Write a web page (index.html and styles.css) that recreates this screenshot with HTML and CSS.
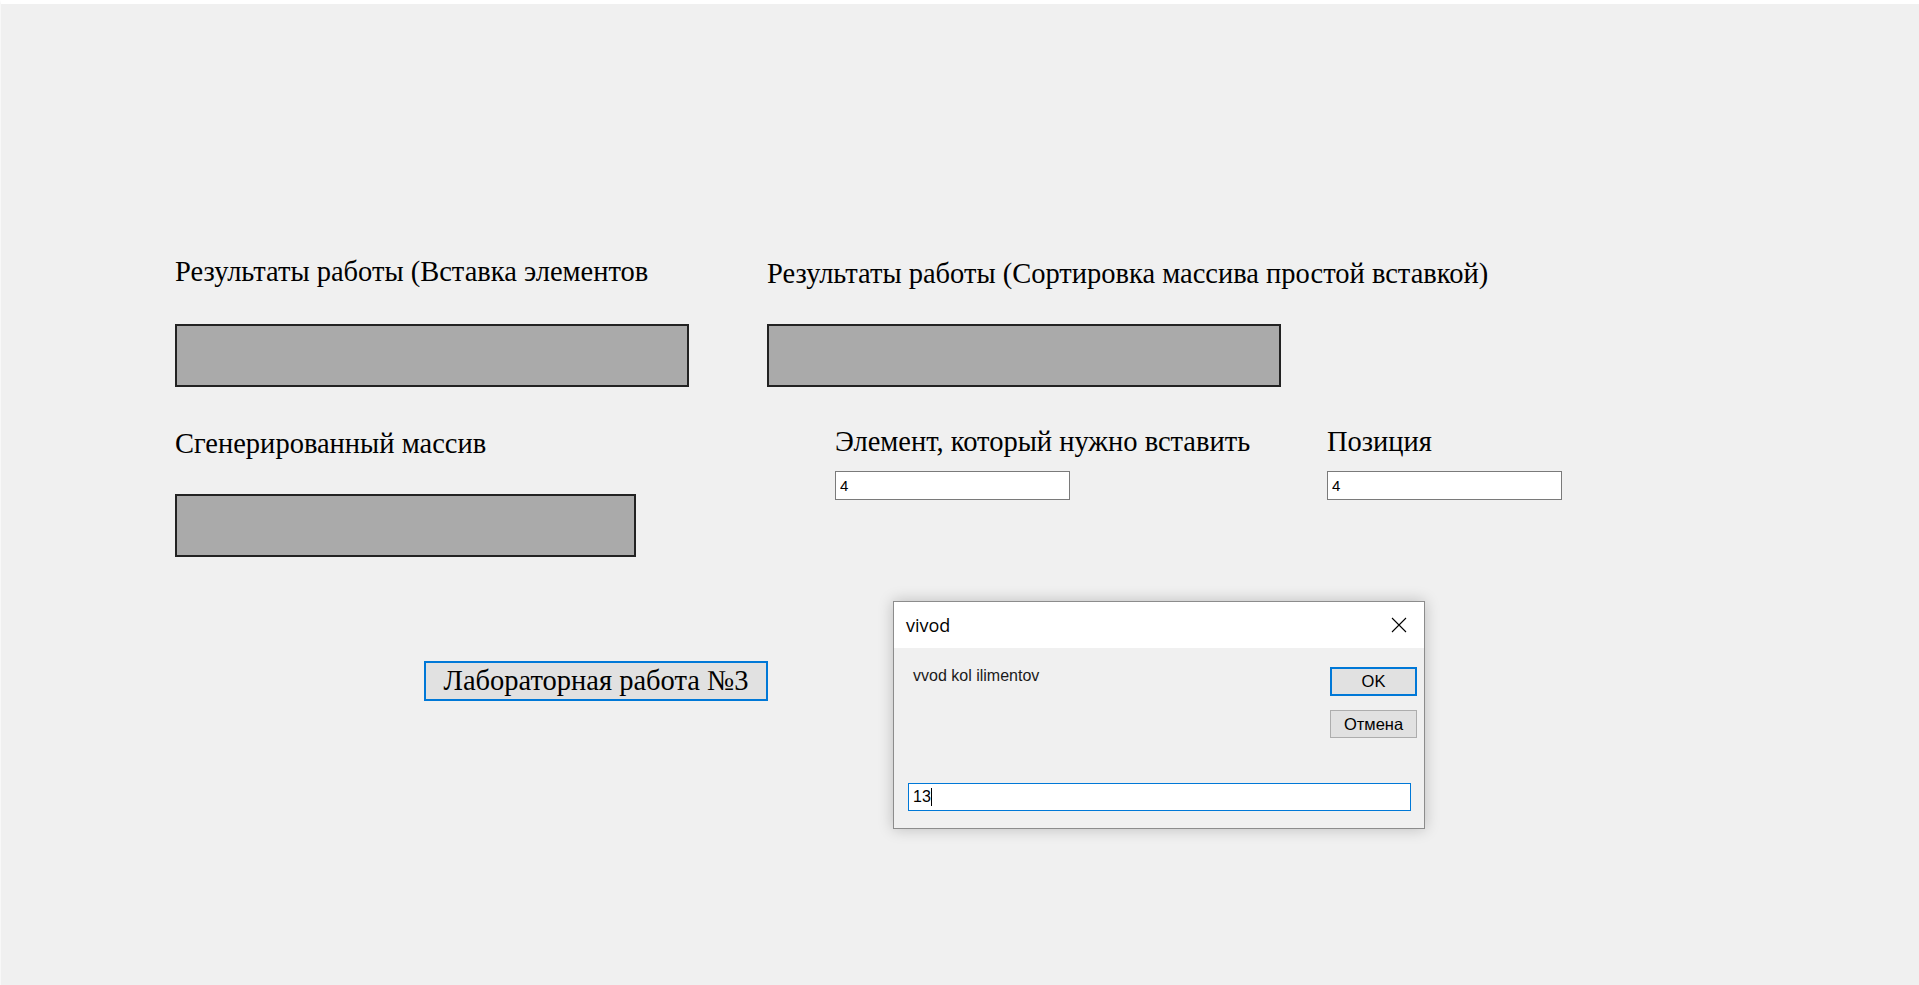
FILE: index.html
```html
<!DOCTYPE html>
<html lang="ru">
<head>
    <meta charset="UTF-8">
    <meta name="viewport" content="width=device-width, initial-scale=1.0">
    <title>Лабораторная работа №3</title>
    <link rel="stylesheet" href="styles.css">
</head>
<body>
    <div id="form">
        <div class="row row-results">
            <div class="field field-insert">
                <div class="caption">Результаты работы (Вставка элементов</div>
                <div class="output output-wide"></div>
            </div>
            <div class="field field-sort">
                <div class="caption">Результаты работы (Сортировка массива простой вставкой)</div>
                <div class="output output-wide"></div>
            </div>
        </div>

        <div class="row row-input">
            <div class="field field-array">
                <div class="caption">Сгенерированный массив</div>
                <div class="output output-short"></div>
            </div>
            <div class="field field-element">
                <div class="caption">Элемент, который нужно вставить</div>
                <input class="textbox" type="text" value="4">
            </div>
            <div class="field field-position">
                <div class="caption">Позиция</div>
                <input class="textbox" type="text" value="4">
            </div>
        </div>

        <button class="lab-btn">Лабораторная работа №3</button>
    </div>

    <div id="inputDialog">
        <div class="dialog-title">
            <span>vivod</span>
            <svg class="dialog-close" width="16" height="16" viewBox="0 0 16 16">
                <path d="M1 1 L15 15 M15 1 L1 15" stroke="#000" stroke-width="1.1" fill="none"/>
            </svg>
        </div>
        <div class="dialog-body">
            <div class="dialog-top">
                <div class="dialog-prompt">vvod kol ilimentov</div>
                <div class="dialog-buttons">
                    <button class="win-btn win-btn-default">OK</button>
                    <button class="win-btn">Отмена</button>
                </div>
            </div>
            <div class="dialog-input">13<span class="caret"></span></div>
        </div>
    </div>
</body>
</html>
```

FILE: styles.css
```css
* {
    margin: 0;
    padding: 0;
    box-sizing: border-box;
}

html, body {
    width: 100%;
    height: 100%;
}

body {
    background: #f0f0f0;
    border-top: 4px solid #ffffff;
    border-left: 1px solid #f8f8f8;
    font-family: 'Liberation Serif', 'Times New Roman', serif;
    color: #000;
    overflow: hidden;
}

#form {
    padding: 252px 0 0 174px;
}

.row {
    display: flex;
}

.caption {
    font-size: 28.5px;
    line-height: 31px;
    white-space: nowrap;
}

.output {
    background: #aaaaaa;
    border: 2px solid #222;
    height: 63px;
}

.output-wide {
    width: 514px;
}

.output-short {
    width: 461px;
}

/* первая строка */
.field-insert {
    width: 592px;
}

.field-insert .caption {
    margin-bottom: 37px;
}

.field-sort .caption {
    margin-top: 2px;
    margin-bottom: 35px;
}

/* вторая строка */
.row-input {
    margin-top: 41px;
}

.field-array {
    width: 660px;
}

.field-array .caption {
    margin-bottom: 35px;
}

.field-element {
    width: 492px;
}

.field-element .caption,
.field-position .caption {
    margin-top: -2px;
    margin-bottom: 14px;
}

.textbox {
    display: block;
    width: 235px;
    height: 29px;
    border: 1px solid #7a7a7a;
    background: #fff;
    padding: 0 4px;
    font-family: 'Liberation Sans', Arial, sans-serif;
    font-size: 15px;
    color: #000;
    outline: none;
}

.lab-btn {
    display: block;
    margin: 104px 0 0 249px;
    width: 344px;
    height: 40px;
    background: #e1e1e1;
    border: 2px solid #0078d7;
    font-family: 'Liberation Serif', 'Times New Roman', serif;
    font-size: 28.5px;
    color: #000;
    cursor: pointer;
}

/* окно ввода */
#inputDialog {
    position: absolute;
    left: 893px;
    top: 601px;
    width: 532px;
    height: 228px;
    background: #f0f0f0;
    border: 1px solid #8c8c8c;
    box-shadow: 0 0 14px rgba(0, 0, 0, 0.22);
    font-family: 'Liberation Sans', Arial, sans-serif;
}

.dialog-title {
    display: flex;
    justify-content: space-between;
    align-items: center;
    height: 46px;
    background: #fff;
    padding: 0 17px 0 12px;
    font-family: 'Open Sans', 'Liberation Sans', sans-serif;
    font-size: 18px;
}

.dialog-close {
    display: block;
}

.dialog-body {
    padding: 19px 7px 0 14px;
}

.dialog-top {
    display: flex;
    justify-content: space-between;
}

.dialog-prompt {
    margin-left: 5px;
    font-size: 16px;
    line-height: 17px;
    color: #1a1a1a;
}

.dialog-buttons {
    display: flex;
    flex-direction: column;
    gap: 14px;
}

.win-btn {
    width: 87px;
    height: 28px;
    background: #e1e1e1;
    border: 1px solid #adadad;
    font-family: 'Liberation Sans', Arial, sans-serif;
    font-size: 16.5px;
    color: #000;
}

.win-btn-default {
    height: 29px;
    border: 2px solid #0078d7;
}

.dialog-input {
    display: flex;
    align-items: center;
    margin: 45px 6px 0 0;
    height: 28px;
    background: #fff;
    border: 1px solid #0078d7;
    padding: 0 4px;
    font-size: 16px;
}

.caret {
    display: inline-block;
    width: 1px;
    height: 18px;
    background: #000;
}
```
